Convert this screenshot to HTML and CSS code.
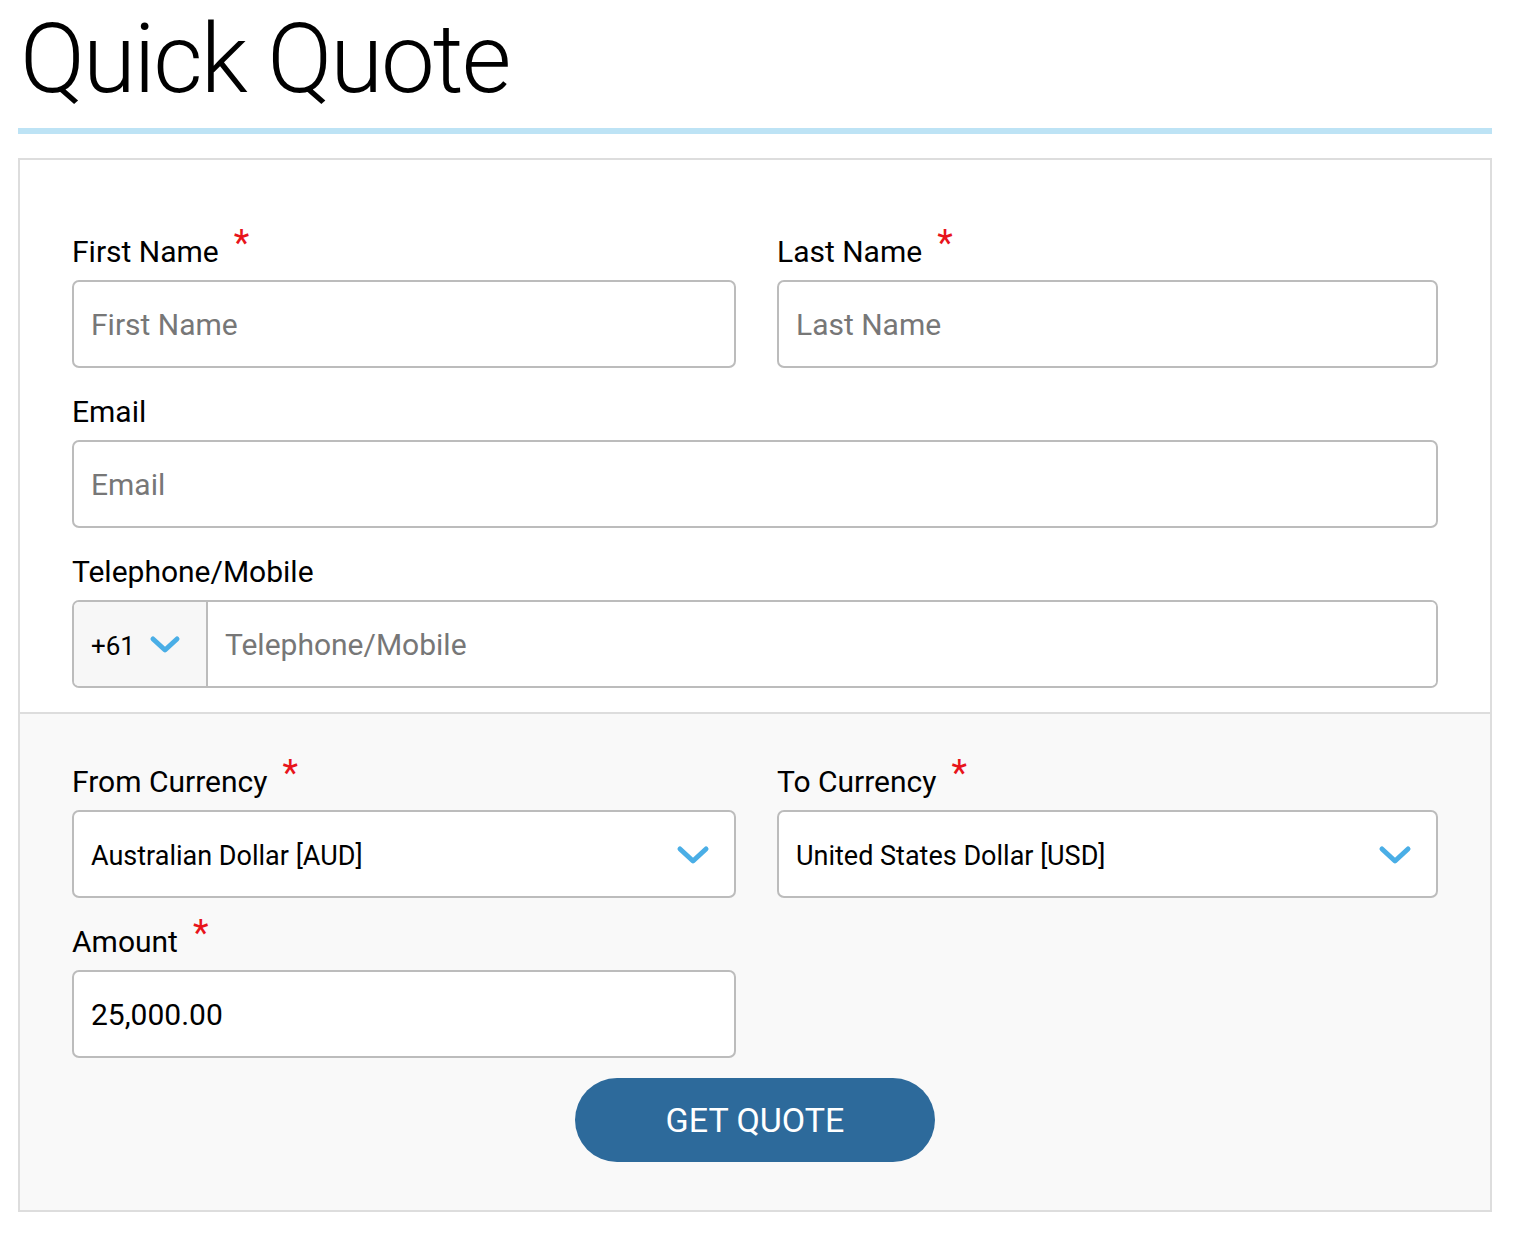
FILE: index.html
```html
<!DOCTYPE html>
<html lang="en">
<head>
<meta charset="utf-8">
<title>Quick Quote</title>
<link rel="stylesheet" href="styles.css">
</head>
<body>
<div class="page">
  <h1 class="title">Quick Quote</h1>
  <form class="card">
    <div class="section section-top">
      <div class="row two">
        <div class="field">
          <label class="label"><span>First Name</span><span class="req">*</span></label>
          <input class="input" type="text" placeholder="First Name">
        </div>
        <div class="field">
          <label class="label"><span>Last Name</span><span class="req">*</span></label>
          <input class="input" type="text" placeholder="Last Name">
        </div>
      </div>
      <div class="row">
        <div class="field">
          <label class="label"><span>Email</span></label>
          <input class="input" type="text" placeholder="Email">
        </div>
      </div>
      <div class="row">
        <div class="field">
          <label class="label"><span>Telephone/Mobile</span></label>
          <div class="phone">
            <div class="code">
              <span>+61</span>
              <svg class="chev-sm" width="32" height="20" viewBox="0 0 32 20"><polyline points="4,4 16,15 28,4" fill="none" stroke="#4aaee6" stroke-width="5" stroke-linecap="round" stroke-linejoin="round"/></svg>
            </div>
            <input class="phone-input" type="text" placeholder="Telephone/Mobile">
          </div>
        </div>
      </div>
    </div>
    <div class="section section-bottom">
      <div class="row two">
        <div class="field">
          <label class="label"><span>From Currency</span><span class="req">*</span></label>
          <div class="select">
            <span>Australian Dollar [AUD]</span>
            <svg class="chev" width="34" height="22" viewBox="0 0 34 22"><polyline points="4,5 17,17 30,5" fill="none" stroke="#4aaee6" stroke-width="5" stroke-linecap="round" stroke-linejoin="round"/></svg>
          </div>
        </div>
        <div class="field">
          <label class="label"><span>To Currency</span><span class="req">*</span></label>
          <div class="select">
            <span>United States Dollar [USD]</span>
            <svg class="chev" width="34" height="22" viewBox="0 0 34 22"><polyline points="4,5 17,17 30,5" fill="none" stroke="#4aaee6" stroke-width="5" stroke-linecap="round" stroke-linejoin="round"/></svg>
          </div>
        </div>
      </div>
      <div class="row two">
        <div class="field">
          <label class="label"><span>Amount</span><span class="req">*</span></label>
          <input class="input value" type="text" value="25,000.00">
        </div>
        <div></div>
      </div>
      <div class="actions">
        <button type="button" class="btn">GET QUOTE</button>
      </div>
    </div>
  </form>
</div>
</body>
</html>
```

FILE: styles.css
```css
* { box-sizing: border-box; }
html, body { margin: 0; padding: 0; background: #fff; }
body { font-family: Roboto, "Open Sans", Arial, sans-serif; color: #000; }

.page {
  padding: 11px 24px 34px 18px;
}

.title {
  margin: 0 0 0 2px;
  font-size: 96px;
  font-weight: 300;
  line-height: 96px;
  letter-spacing: -2px;
  height: 96px;
}

.card {
  display: block;
  margin-top: 21px;
  border-top: 6px solid #bde3f5;
  padding-top: 24px;
}

.section {
  border-left: 2px solid #ddd;
  border-right: 2px solid #ddd;
  padding-left: 52px;
  padding-right: 52px;
  display: flex;
  flex-direction: column;
  gap: 24px;
}

.section-top {
  border-top: 2px solid #ddd;
  padding-top: 72px;
  padding-bottom: 24px;
  background: #fff;
}

.section-bottom {
  border-top: 2px solid #ddd;
  border-bottom: 2px solid #ddd;
  background: #f9f9f9;
  padding-top: 48px;
  padding-bottom: 48px;
}

.row { display: block; }
.row.two {
  display: grid;
  grid-template-columns: 664px 1fr;
  column-gap: 41px;
}

.field { display: flex; flex-direction: column; }

.label {
  display: flex;
  align-items: flex-start;
  gap: 15px;
  height: 40px;
  line-height: 40px;
  font-size: 30px;
  margin-bottom: 8px;
  color: #000;
}

.req {
  color: #e8141b;
  font-size: 36px;
  line-height: 36px;
  margin-top: -7px;
}

.input, .phone, .select {
  height: 88px;
  border: 2px solid #bcbcbc;
  border-radius: 7px;
  background: #fff;
  width: 100%;
}

.input {
  padding: 0 17px;
  font-family: inherit;
  font-size: 30px;
  color: #000;
  outline: none;
}

.input::placeholder, .phone-input::placeholder {
  color: #777;
  opacity: 1;
}

.phone {
  display: flex;
  overflow: hidden;
}

.code {
  width: 134px;
  flex: none;
  background: #f7f7f7;
  border-right: 2px solid #bcbcbc;
  display: flex;
  align-items: center;
  padding: 4px 0 0 17px;
  gap: 14px;
  font-size: 26px;
}

.chev-sm { margin-top: -2px; }

.phone-input {
  flex: 1;
  border: none;
  outline: none;
  padding: 0 17px;
  font-family: inherit;
  font-size: 30px;
  background: #fff;
}

.select {
  display: flex;
  align-items: center;
  justify-content: space-between;
  padding: 4px 24px 0 17px;
  font-size: 27px;
}

.chev { display: block; margin-top: -2px; }

.actions {
  display: flex;
  justify-content: center;
  margin-top: -4px;
}

.btn {
  width: 360px;
  height: 84px;
  border: none;
  border-radius: 42px;
  background: #2d6a9b;
  color: #fff;
  font-family: inherit;
  font-size: 34px;
  cursor: pointer;
}
```
